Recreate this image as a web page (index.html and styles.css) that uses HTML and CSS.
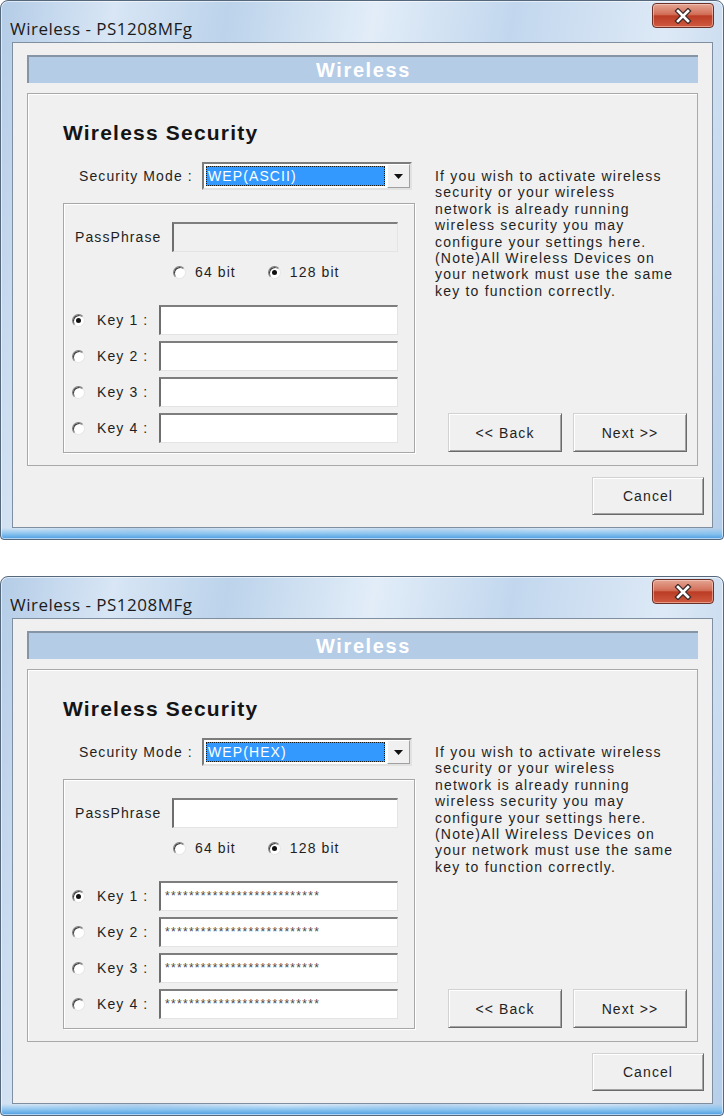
FILE: index.html
```html
<!DOCTYPE html>
<html lang="en">

<head>
  <meta charset="UTF-8" />
  <meta name="viewport" content="width=device-width, initial-scale=1.0" />
  <title>Wireless - PS1208MFg</title>
  <link rel="stylesheet" href="styles.css">
</head>

<body>
  <!-- step 1: WEP(ASCII) -->
  <div class="window">
    <div class="titlebar">
      <span class="title">Wireless - PS1208MFg</span>
      <span class="close-btn">
        <svg width="20" height="16" viewBox="0 0 20 16">
          <path d="M5 3 L15 13 M15 3 L5 13" stroke="#3a2a28" stroke-width="5" stroke-linecap="square" fill="none" />
          <path d="M5 3 L15 13 M15 3 L5 13" stroke="#fff" stroke-width="2.6" stroke-linecap="square" fill="none" />
        </svg>
      </span>
    </div>
    <div class="client">
      <div class="banner">Wireless</div>
      <div class="panel">
        <h1 class="heading">Wireless Security</h1>
        <div class="panel-body">
          <div class="form-col">
            <div class="mode-row">
              <span class="mode-label">Security Mode :</span>
              <div class="select">
                <span class="select-value">WEP(ASCII)</span>
                <span class="select-arrow">
                  <svg width="9" height="5" viewBox="0 0 9 5"><path d="M0 0 H9 L4.5 5 Z" fill="#111" /></svg>
                </span>
              </div>
            </div>
            <div class="group">
              <div class="pass-row">
                <span class="pass-label">PassPhrase</span>
                <span class="textbox pass-box disabled"></span>
              </div>
              <div class="bit-row">
                <span class="radio"></span><span class="bit-label">64 bit</span>
                <span class="radio radio-128 checked"></span><span class="bit-label">128 bit</span>
              </div>
              <div class="key-list">
                <div class="key-row"><span class="radio checked"></span><span class="key-label">Key 1 :</span><span class="textbox key-box"></span></div>
                <div class="key-row"><span class="radio"></span><span class="key-label">Key 2 :</span><span class="textbox key-box"></span></div>
                <div class="key-row"><span class="radio"></span><span class="key-label">Key 3 :</span><span class="textbox key-box"></span></div>
                <div class="key-row"><span class="radio"></span><span class="key-label">Key 4 :</span><span class="textbox key-box"></span></div>
              </div>
            </div>
          </div>
          <div class="info-col">
            <p class="info">If you wish to activate wireless<br>security or your wireless<br>network is already running<br>wireless security you may<br>configure your settings here.<br>(Note)All Wireless Devices on<br>your network must use the same<br>key to function correctly.</p>
            <div class="nav-buttons">
              <span class="btn">&lt;&lt; Back</span>
              <span class="btn">Next &gt;&gt;</span>
            </div>
          </div>
        </div>
      </div>
      <div class="footer">
        <span class="btn cancel-btn">Cancel</span>
      </div>
    </div>
  </div>

  <!-- step 2: WEP(HEX) -->
  <div class="window">
    <div class="titlebar">
      <span class="title">Wireless - PS1208MFg</span>
      <span class="close-btn">
        <svg width="20" height="16" viewBox="0 0 20 16">
          <path d="M5 3 L15 13 M15 3 L5 13" stroke="#3a2a28" stroke-width="5" stroke-linecap="square" fill="none" />
          <path d="M5 3 L15 13 M15 3 L5 13" stroke="#fff" stroke-width="2.6" stroke-linecap="square" fill="none" />
        </svg>
      </span>
    </div>
    <div class="client">
      <div class="banner">Wireless</div>
      <div class="panel">
        <h1 class="heading">Wireless Security</h1>
        <div class="panel-body">
          <div class="form-col">
            <div class="mode-row">
              <span class="mode-label">Security Mode :</span>
              <div class="select">
                <span class="select-value">WEP(HEX)</span>
                <span class="select-arrow">
                  <svg width="9" height="5" viewBox="0 0 9 5"><path d="M0 0 H9 L4.5 5 Z" fill="#111" /></svg>
                </span>
              </div>
            </div>
            <div class="group">
              <div class="pass-row">
                <span class="pass-label">PassPhrase</span>
                <span class="textbox pass-box"></span>
              </div>
              <div class="bit-row">
                <span class="radio"></span><span class="bit-label">64 bit</span>
                <span class="radio radio-128 checked"></span><span class="bit-label">128 bit</span>
              </div>
              <div class="key-list">
                <div class="key-row"><span class="radio checked"></span><span class="key-label">Key 1 :</span><span class="textbox key-box">**************************</span></div>
                <div class="key-row"><span class="radio"></span><span class="key-label">Key 2 :</span><span class="textbox key-box">**************************</span></div>
                <div class="key-row"><span class="radio"></span><span class="key-label">Key 3 :</span><span class="textbox key-box">**************************</span></div>
                <div class="key-row"><span class="radio"></span><span class="key-label">Key 4 :</span><span class="textbox key-box">**************************</span></div>
              </div>
            </div>
          </div>
          <div class="info-col">
            <p class="info">If you wish to activate wireless<br>security or your wireless<br>network is already running<br>wireless security you may<br>configure your settings here.<br>(Note)All Wireless Devices on<br>your network must use the same<br>key to function correctly.</p>
            <div class="nav-buttons">
              <span class="btn">&lt;&lt; Back</span>
              <span class="btn">Next &gt;&gt;</span>
            </div>
          </div>
        </div>
      </div>
      <div class="footer">
        <span class="btn cancel-btn">Cancel</span>
      </div>
    </div>
  </div>
</body>

</html>
```

FILE: styles.css
```css
* {
  box-sizing: border-box;
  margin: 0;
  padding: 0;
}

body {
  background: #fff;
  font-family: "Liberation Sans", Arial, sans-serif;
  font-size: 14px;
  letter-spacing: 1.1px;
  color: #1f1f1f;
}

/* vista style frame */
.window {
  display: flex;
  flex-direction: column;
  width: 724px;
  height: 540px;
  padding-bottom: 11px;
  border: 1px solid #56687c;
  border-radius: 8px 8px 4px 4px;
  background:
    linear-gradient(to top, #4c9be0 0, #86c2ef 5px, rgba(150, 200, 240, 0) 11px),
    linear-gradient(100deg, #b4cce7 0%, #d8e6f5 14%, #bcd3eb 28%, #e2edf8 46%, #c2d7ee 63%, #dde9f6 82%, #b5cee9 100%);
  box-shadow: inset 0 0 0 1px rgba(255, 255, 255, 0.55);
}

.window+.window {
  margin-top: 36px;
}

.titlebar {
  display: flex;
  align-items: flex-start;
  justify-content: space-between;
  height: 41px;
  padding: 0 9px;
}

.title {
  margin-top: 18px;
  font-family: "Open Sans", "Noto Sans", sans-serif;
  font-size: 17px;
  line-height: 20px;
  letter-spacing: 0.5px;
  color: #1b1b1b;
}

.close-btn {
  display: flex;
  align-items: center;
  justify-content: center;
  width: 62px;
  height: 25px;
  margin-top: 2px;
  border: 1px solid #6b3027;
  border-radius: 4px;
  background: linear-gradient(#e4a593 0%, #d36f58 45%, #bb3c24 52%, #cf5a40 100%);
  box-shadow: inset 0 0 0 1px rgba(255, 220, 210, 0.5);
}

.client {
  display: flex;
  flex-direction: column;
  flex: 1;
  margin: 0 10px 0 11px;
  padding-top: 12px;
  border: 1px solid #7f8fa0;
  background: #f0f0f0;
}

.banner {
  height: 28px;
  margin: 0 14px;
  border-top: 2px solid #8595a6;
  border-left: 2px solid #8595a6;
  background: #b5cce6;
  color: #fff;
  font-size: 20px;
  font-weight: bold;
  line-height: 26px;
  letter-spacing: 1.6px;
  text-align: center;
}

.panel {
  height: 373px;
  margin: 10px 14px 0;
  padding: 27px 0 0 35px;
  border: 1px solid #a9a9a9;
  box-shadow: inset 1px 1px 0 #fff;
}

.heading {
  font-size: 21px;
  line-height: 24px;
  font-weight: bold;
  letter-spacing: 1.2px;
  color: #141414;
}

.panel-body {
  display: flex;
  margin-top: 17px;
}

.form-col {
  width: 352px;
}

.mode-row {
  display: flex;
  align-items: center;
  height: 28px;
  padding-left: 16px;
}

.mode-label {
  width: 123px;
}

.select {
  display: flex;
  width: 210px;
  height: 28px;
  border: 2px solid;
  border-color: #7c7c7c #e2e2e2 #e2e2e2 #7c7c7c;
  background: #fff;
}

.select-value {
  flex: 1;
  margin: 2px;
  padding-left: 2px;
  background: #3399ff;
  outline: 1px dotted #1a1a1a;
  outline-offset: -1px;
  color: #fff;
  line-height: 20px;
}

.select-arrow {
  display: flex;
  align-items: center;
  justify-content: center;
  width: 23px;
  border: 1px solid;
  border-color: #fff #a0a0a0 #a0a0a0 #fff;
  background: #f0f0f0;
}

.group {
  height: 250px;
  margin-top: 13px;
  padding-top: 18px;
  border: 1px solid #a7a7a7;
  box-shadow: inset 1px 1px 0 #fff, 1px 1px 0 #fff;
}

.pass-row {
  display: flex;
  align-items: center;
  height: 30px;
  padding-left: 11px;
}

.pass-label {
  width: 97px;
}

.textbox {
  height: 30px;
  border-top: 2px solid #7e7e7e;
  border-left: 2px solid #6e6e6e;
  border-right: 1px solid #e4e4e4;
  border-bottom: 1px solid #e4e4e4;
  background: #fff;
}

.textbox.disabled {
  background: #f0f0f0;
}

.pass-box {
  width: 226px;
}

.bit-row {
  display: flex;
  align-items: center;
  height: 16px;
  margin-top: 12px;
  padding-left: 109px;
}

.bit-label {
  margin-left: 9px;
}

.radio-128 {
  margin-left: 32px;
}

.radio {
  display: flex;
  align-items: center;
  justify-content: center;
  flex: none;
  width: 13px;
  height: 13px;
  border: 1px solid;
  border-color: #7d7d7d #e6e6e6 #e6e6e6 #7d7d7d;
  border-radius: 50%;
  background: #fff;
  box-shadow: inset 1px 1px 0 #3e3e3e;
}

.radio.checked::after {
  content: "";
  width: 5px;
  height: 5px;
  border-radius: 50%;
  background: #111;
}

.key-list {
  display: flex;
  flex-direction: column;
  gap: 6px;
  margin-top: 25px;
}

.key-row {
  display: flex;
  align-items: center;
  padding-left: 8px;
}

.key-label {
  width: 62px;
  margin-left: 12px;
}

.key-box {
  width: 239px;
  padding: 6px 0 0 4px;
  font-size: 12px;
  line-height: 14px;
  letter-spacing: 1.3px;
  color: #4a4a4a;
}

.info-col {
  display: flex;
  flex-direction: column;
  justify-content: space-between;
  flex: 1;
  margin-left: 20px;
}

.info {
  margin-top: 6px;
  line-height: 16.4px;
  letter-spacing: 1.2px;
  white-space: nowrap;
}

.nav-buttons {
  display: flex;
  gap: 11px;
  margin-bottom: 1px;
  padding-left: 13px;
}

.btn {
  display: flex;
  align-items: center;
  justify-content: center;
  width: 114px;
  height: 39px;
  border: 1px solid;
  border-color: #d2d2d2 #6a6a6a #6a6a6a #d2d2d2;
  background: #f0f0f0;
  box-shadow: inset 1px 1px 0 #fff, inset -1px -1px 0 #a3a3a3;
  color: #1f1f1f;
}

.footer {
  display: flex;
  justify-content: flex-end;
  margin-top: 11px;
  padding-right: 8px;
}

.cancel-btn {
  width: 112px;
  height: 38px;
}
```
